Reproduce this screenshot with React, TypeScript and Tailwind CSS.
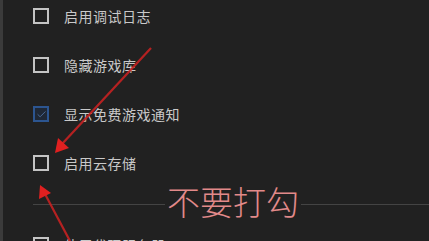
import { Check } from 'lucide-react';

const items = [
  { label: '启用调试日志', checked: false },
  { label: '隐藏游戏库', checked: false },
  { label: '显示免费游戏通知', checked: true },
  { label: '启用云存储', checked: false },
];

export default function App() {
  return (
    <div
      className="relative flex h-[241px] w-[429px] overflow-hidden bg-[#212121]"
      style={{ fontFamily: '"Noto Sans CJK SC", "Noto Sans", sans-serif' }}
    >
      <div className="w-[3px] shrink-0 bg-[#3b3b3b]" />

      <div className="flex flex-1 flex-col pl-[30px]">
        <div className="flex flex-col gap-[17px]">
          {items.map((it) => (
            <Row key={it.label} label={it.label} checked={it.checked} />
          ))}
        </div>
        <div className="mt-[25px] h-px shrink-0 bg-[#444444]" />
        <div className="mt-[24px]">
          <Row label="使用代理服务器" checked={false} />
        </div>
      </div>

      {/* annotation overlay */}
      <svg className="pointer-events-none absolute inset-0" width="429" height="241" viewBox="0 0 429 241">
        <line x1="151" y1="48" x2="62" y2="144" stroke="#c62222" strokeWidth="2.2" opacity="0.9" />
        <polygon points="55,153 58,138 69,148" fill="#e02020" />
        <line x1="70" y1="241" x2="45" y2="194" stroke="#c62222" strokeWidth="2.2" opacity="0.9" />
        <polygon points="40,185 39,199 51,193" fill="#e02020" />
      </svg>
      <div
        className="absolute left-[165px] top-[178px] bg-[#212121] px-[2px] text-[33px] font-light leading-[46px] text-[#e28a8a]"
        style={{ fontFamily: '"Noto Sans CJK SC", serif' }}
      >
        不要打勾
      </div>
    </div>
  );
}

function Row({ label, checked }: { label: string; checked: boolean }) {
  return (
    <div className="flex h-[32px] items-center gap-[15px]">
      <div
        className={`flex h-[16px] w-[16px] shrink-0 items-center justify-center border-2 ${
          checked ? 'border-[#2c5590] bg-[#1f2836]' : 'border-[#c4c4c4]'
        }`}
      >
        {checked && <Check size={11} strokeWidth={2} className="text-[#4d6f9e]" />}
      </div>
      <div className="text-[14px] tracking-[0.5px] text-[#c9c9c9]">{label}</div>
    </div>
  );
}
